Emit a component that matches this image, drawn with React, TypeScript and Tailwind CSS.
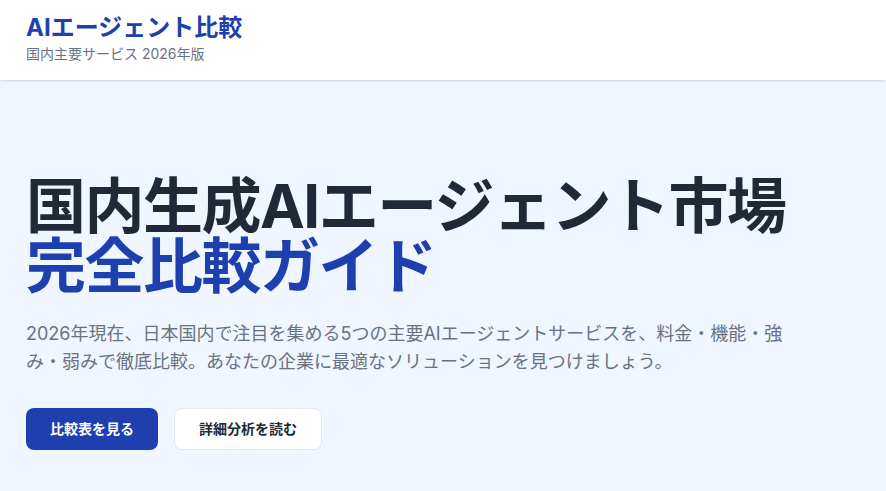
export default function App() {
  const font = { fontFamily: 'Inter, "Noto Sans CJK JP", sans-serif' };
  return (
    <div style={font} className="min-h-screen bg-[#eff6ff]">
      <header className="bg-white shadow-sm">
        <div className="px-[26px] pt-3 pb-4">
          <h1 className="text-2xl font-bold text-[#1e40af]">AIエージェント比較</h1>
          <p className="text-sm text-gray-500">国内主要サービス 2026年版</p>
        </div>
      </header>
      <section className="px-[26px] pt-24 pb-24">
        <h2 className="text-6xl font-bold leading-none tracking-tight text-[#1f2937]">
          国内生成AIエージェント市場
          <br />
          <span className="text-[#1e40af]">完全比較ガイド</span>
        </h2>
        <p className="mt-6 max-w-3xl text-lg text-gray-500">
          2026年現在、日本国内で注目を集める5つの主要AIエージェントサービスを、料金・機能・強み・弱みで徹底比較。あなたの企業に最適なソリューションを見つけましょう。
        </p>
        <div className="mt-8 flex gap-4">
          <button className="rounded-lg bg-[#1e40af] px-6 py-2.5 text-sm font-semibold text-white">
            比較表を見る
          </button>
          <button className="rounded-lg border border-gray-200 bg-white px-6 py-2.5 text-sm font-semibold text-gray-800">
            詳細分析を読む
          </button>
        </div>
      </section>
    </div>
  );
}
